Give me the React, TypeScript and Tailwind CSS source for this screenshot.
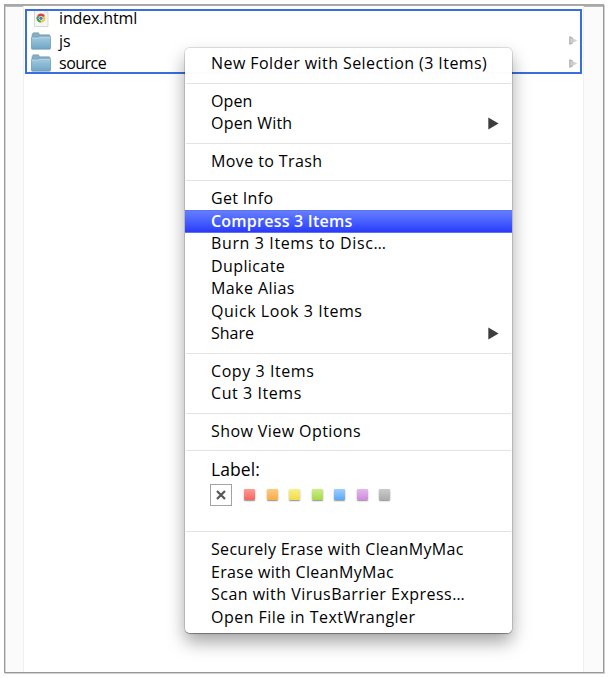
type Item = { text: string; tracking: string; sub?: boolean; selected?: boolean };

const groups: Item[][] = [
  [{ text: 'New Folder with Selection (3 Items)', tracking: 'tracking-[0.43px]' }],
  [
    { text: 'Open', tracking: 'tracking-[0.1px]' },
    { text: 'Open With', tracking: 'tracking-[0.2px]', sub: true },
  ],
  [{ text: 'Move to Trash', tracking: 'tracking-[0.4px]' }],
  [
    { text: 'Get Info', tracking: 'tracking-[0.32px]' },
    { text: 'Compress 3 Items', tracking: 'tracking-[0.23px]', selected: true },
    { text: 'Burn 3 Items to Disc…', tracking: 'tracking-[0.62px]' },
    { text: 'Duplicate', tracking: 'tracking-[0.4px]' },
    { text: 'Make Alias', tracking: 'tracking-[0.42px]' },
    { text: 'Quick Look 3 Items', tracking: 'tracking-[0.55px]' },
    { text: 'Share', tracking: 'tracking-[-0.02px]', sub: true },
  ],
  [
    { text: 'Copy 3 Items', tracking: 'tracking-[0.57px]' },
    { text: 'Cut 3 Items', tracking: 'tracking-[0.57px]' },
  ],
  [{ text: 'Show View Options', tracking: 'tracking-[0.42px]' }],
];

const erase: Item[] = [
  { text: 'Securely Erase with CleanMyMac', tracking: 'tracking-[0.31px]' },
  { text: 'Erase with CleanMyMac', tracking: 'tracking-[0.31px]' },
  { text: 'Scan with VirusBarrier Express…', tracking: 'tracking-[0.48px]' },
  { text: 'Open File in TextWrangler', tracking: 'tracking-[0.47px]' },
];

const swatches = [
  'from-[#ff9a94] to-[#f8645f]',
  'from-[#ffc980] to-[#fbac3e]',
  'from-[#faf186] to-[#f0dc45]',
  'from-[#cdee86] to-[#a6da48]',
  'from-[#9dcfff] to-[#5ca7f8]',
  'from-[#e5b8ec] to-[#cf8bdc]',
  'from-[#cbcbcb] to-[#acacac]',
];

function Row({ item }: { item: Item }) {
  return (
    <div
      className={`flex items-center justify-between pr-[13px] pl-[26px] ${
        item.selected
          ? '-mb-[0.5px] h-[23px] border-y border-[#5a73ee] bg-linear-to-b from-[#667dff] to-[#2c38fb] font-semibold text-white'
          : 'h-[22.5px]'
      }`}
    >
      <span className={`leading-[22px] whitespace-nowrap ${item.tracking}`}>{item.text}</span>
      {item.sub && (
        <svg width="11" height="13" viewBox="0 0 11 13">
          <path d="M.3.6v11.8L10.6 6.5z" fill="#3d3d3d" />
        </svg>
      )}
    </div>
  );
}

function Separator() {
  return (
    <div className="h-[15px] pt-2">
      <div className="mx-px h-px bg-[#e3e3e3]" />
    </div>
  );
}

function Folder() {
  return (
    <svg width="20" height="18" viewBox="0 0 20 18">
      <defs>
        <linearGradient id="folder" x1="0" y1="0" x2="0" y2="1">
          <stop offset="0" stopColor="#a5cbdf" />
          <stop offset="1" stopColor="#6ea6c6" />
        </linearGradient>
      </defs>
      <path d="M1 16V2.8L2.2.8h5.3l1.2 2h9.6l.7 1V16z" fill="#86adc2" stroke="#7198ad" strokeWidth=".6" />
      <path d="M.3 6.2q0-.9.9-.9h6.3l1-.9h10.2q1 0 1 .9l-.3 11.2q0 .7-.7.7H1.2q-.7 0-.7-.7z" fill="url(#folder)" stroke="#6293ae" strokeWidth=".6" />
      <path d="M1 6h6.9l1-.8H19" fill="none" stroke="#c4dfec" strokeWidth=".7" />
    </svg>
  );
}

function ChromeDoc() {
  return (
    <svg width="20" height="18" viewBox="0 0 20 18">
      <path d="M3.5 0h10l3.5 3.2v14.3H3.5z" fill="#f6f6f6" stroke="#cfcfcf" strokeWidth=".8" />
      <path d="M13.5 0v3.2H17" fill="#fff" stroke="#cfcfcf" strokeWidth=".6" />
      <path d="M10 9.2L6.1 6.9A4.5 4.5 0 0 1 14 7z" fill="#dc4235" />
      <path d="M10 9.2L6.1 6.9A4.5 4.5 0 0 0 9.8 13.7z" fill="#3ca655" />
      <path d="M10 9.2L14 7a4.5 4.5 0 0 1-4.2 6.7z" fill="#f6c836" />
      <circle cx="10" cy="9.2" r="2.2" fill="#fff" />
      <circle cx="10" cy="9.2" r="1.7" fill="#3f7fd4" />
    </svg>
  );
}

function FileRow({ name, tracking, doc }: { name: string; tracking: string; doc?: boolean }) {
  return (
    <div className="flex h-[22.5px] shrink-0 items-center pr-[2px] pl-1">
      {doc ? <ChromeDoc /> : <Folder />}
      <span className={`ml-[8px] grow leading-[22px] ${tracking}`}>{name}</span>
      {!doc && (
        <svg width="9" height="9" viewBox="0 0 9 9">
          <path d="M.6.7v7.6L8.3 4.5z" fill="#cfcfcf" />
          <path d="M.8.5v8M1 .8l3 1.5M1 8.2l3-1.5" stroke="#a0a0a0" strokeWidth=".9" />
        </svg>
      )}
    </div>
  );
}

export default function App() {
  return (
    <div className="relative h-[678px] w-[610px] bg-white pt-1 pl-[4px] font-['Open_Sans',sans-serif] text-[16px] text-black">
      <div className="flex h-[669px] w-[600px] border border-t-2 border-[#999] border-t-[#a8a8a8] bg-[#fbfbfb] shadow-[1px_1px_0_#d0d0d0,inset_0_1px_0_#b8b8b8,inset_1px_0_0_#d8d8d8]">
        <div className="ml-[18px] h-full w-[561px] border-x border-[#f0f0f0] bg-white pt-[3px] pl-px">
          <div className="flex h-[65px] w-[557px] flex-col overflow-hidden border-2 border-[#396ee0]">
            <div className="-mt-[4px]">
              <FileRow name="index.html" tracking="tracking-[-0.15px]" doc />
              <FileRow name="js" tracking="tracking-[-0.1px]" />
              <FileRow name="source" tracking="tracking-[-0.5px]" />
            </div>
          </div>
        </div>
      </div>

      <div className="absolute top-12 left-[185px] h-[585px] w-[327px] rounded-[5px] bg-white/98 pt-1 shadow-[0_0_0_1px_rgba(0,0,0,0.11),0_1px_1px_rgba(0,0,0,0.3),0_9px_18px_rgba(0,0,0,0.36)]">
        {groups.map((group, i) => (
          <div key={i}>
            {group.map((item) => (
              <Row key={item.text} item={item} />
            ))}
            <Separator />
          </div>
        ))}
        <div className="h-[66px] pt-[1px] pl-[26px]">
          <div className="text-[17.5px] leading-[23px] tracking-[0.1px]">Label:</div>
          <div className="mt-[3px] flex items-center">
            <div className="-ml-px flex size-[22px] items-center justify-center border border-[#a3a3a3] bg-white">
              <svg width="10" height="10" viewBox="0 0 10 10">
                <path d="M1 1l8 8M9 1L1 9" stroke="#555" strokeWidth="2.2" />
              </svg>
            </div>
            <div className="mb-[2px] ml-[12px] flex gap-[11.5px]">
              {swatches.map((c) => (
                <div key={c} className={`size-[11px] rounded-[1px] bg-linear-to-b shadow-[0_1px_1.5px_rgba(0,0,0,0.45)] ${c}`} />
              ))}
            </div>
          </div>
        </div>
        <Separator />
        {erase.map((item) => (
          <Row key={item.text} item={item} />
        ))}
      </div>
    </div>
  );
}
